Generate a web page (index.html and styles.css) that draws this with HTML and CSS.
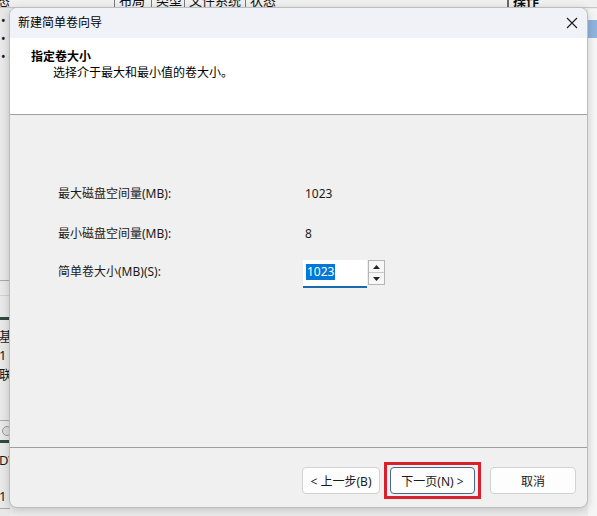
FILE: index.html
```html
<!DOCTYPE html>
<html lang="zh-CN">
<head>
    <meta charset="UTF-8">
    <meta name="viewport" content="width=device-width, initial-scale=1.0">
    <title>新建简单卷向导</title>
    <link rel="stylesheet" href="styles.css">
</head>
<body>
    <!-- 背后的磁盘管理窗口 -->
    <div class="console">
        <div class="col-head">
            <span class="col first">态</span>
            <span class="col c1">布局</span>
            <span class="col c2">类型</span>
            <span class="col c3">文件系统</span>
            <span class="col c4">状态</span>
            <span class="col c5">操作</span>
        </div>
        <div class="side-left">
            <div class="vol">•</div>
            <div class="vol">•</div>
            <div class="vol">• (</div>
            <div class="rule r1"></div>
            <div class="rule r2"></div>
            <div class="disk-bar b1"></div>
            <div class="disk-txt">基本</div>
            <div class="disk-txt">1</div>
            <div class="disk-txt">联机</div>
            <div class="rule r3"></div>
            <div class="disc-ico"></div>
            <div class="disk-bar b2"></div>
            <div class="disk-txt">DVD</div>
            <div class="disk-txt t2">1 未</div>
            <div class="rule r4"></div>
        </div>
        <div class="side-right">
            <div class="action-bar"></div>
        </div>
    </div>

    <!-- 向导对话框 -->
    <div class="dialog">
        <div class="titlebar">
            <span class="title">新建简单卷向导</span>
            <svg class="close" width="12" height="12" viewBox="0 0 12 12">
                <path d="M1 1 L11 11 M11 1 L1 11" stroke="#1a1a1a" stroke-width="1.1" fill="none"/>
            </svg>
        </div>

        <div class="header">
            <div class="header-title">指定卷大小</div>
            <div class="header-sub">选择介于最大和最小值的卷大小。</div>
        </div>

        <div class="content">
            <div class="row row-max">
                <span class="label">最大磁盘空间量(MB):</span>
                <span class="value">1023</span>
            </div>
            <div class="row row-min">
                <span class="label">最小磁盘空间量(MB):</span>
                <span class="value">8</span>
            </div>
            <div class="row row-size">
                <span class="label">简单卷大小(MB)(S):</span>
                <div class="spin">
                    <div class="spin-input"><span class="selected">1023</span></div>
                    <div class="spin-btns">
                        <div class="spin-btn">
                            <svg width="7" height="4" viewBox="0 0 7 4"><path d="M0 4 L3.5 0 L7 4 Z" fill="#222"/></svg>
                        </div>
                        <div class="spin-btn">
                            <svg width="7" height="4" viewBox="0 0 7 4"><path d="M0 0 L3.5 4 L7 0 Z" fill="#222"/></svg>
                        </div>
                    </div>
                </div>
            </div>
        </div>

        <div class="footer">
            <button class="btn btn-back">&lt; 上一步(B)</button>
            <button class="btn btn-next">下一页(N) &gt;<span class="mark"></span></button>
            <button class="btn btn-cancel">取消</button>
        </div>
    </div>
</body>
</html>
```

FILE: styles.css
```css
* {
    margin: 0;
    padding: 0;
    box-sizing: border-box;
}

body {
    width: 597px;
    height: 516px;
    overflow: hidden;
    position: relative;
    background: #ececec;
    font-family: "Noto Sans", "Noto Sans CJK SC", sans-serif;
    font-size: 12px;
    color: #1a1a1a;
}

/* 背景窗口 */
.console {
    width: 100%;
    height: 100%;
    display: flex;
    flex-direction: column;
}

.col-head {
    height: 8px;
    display: flex;
    background: #f0f0f0;
    border-bottom: 1px solid #c8c8c8;
    overflow: hidden;
}

.col {
    flex-shrink: 0;
    white-space: nowrap;
    line-height: 14px;
    margin-top: -7px;
    padding: 0 4px;
    border-left: 1px solid #7a7a7a;
    font-size: 13px;
    color: #111;
}

.first {
    border-left: none;
    margin-left: -7px;
    width: 121px;
}

.c1 { width: 37px; }
.c2 { width: 33px; }
.c3 { width: 61px; }
.c4 { width: 262px; }
.c5 { border-left: 2px solid #6a6a6a; font-weight: bold; }

.side-left {
    width: 10px;
    display: flex;
    flex-direction: column;
    overflow: hidden;
    white-space: nowrap;
    background: #e8e8e8;
    flex: 1;
}

.vol {
    line-height: 18px;
    font-size: 12px;
    padding-left: 1px;
}

.vol:first-child {
    margin-top: 4px;
}

.rule {
    height: 1px;
    background: #a8a8a8;
}

.r1 { margin-top: 214px; }
.r2 { margin-top: 14px; background: #d0d0d0; }
.r3 { margin-top: 36px; }
.r4 { margin-top: 2px; }

.disk-bar {
    height: 3px;
    background: #2f4b3a;
}

.b1 { margin-top: 21px; }
.b2 { margin-top: 4px; }

.disk-txt {
    line-height: 19px;
    font-size: 13px;
    margin-left: -1px;
}

.b1 + .disk-txt { margin-top: 7px; }
.b2 + .disk-txt { margin-top: 8px; }
.t2 { margin-top: 17px; }

.disc-ico {
    width: 10px;
    height: 10px;
    margin-top: 5px;
    margin-left: 2px;
    border-radius: 50%;
    border: 1px solid #9a9a9a;
    background: #dcdcdc;
}

.side-right {
    position: absolute;
    right: 0;
    top: 9px;
    width: 9px;
    bottom: 0;
    background: #f5f5f5;
}

.action-bar {
    height: 18px;
    margin-top: 11px;
    background: #8fb3dc;
}

/* 对话框 */
.dialog {
    position: absolute;
    left: 9px;
    top: 7px;
    width: 579px;
    height: 501px;
    display: flex;
    flex-direction: column;
    background: #f0f0f0;
    border: 1px solid #bdbdbd;
    border-radius: 8px;
    overflow: hidden;
    box-shadow: 0 2px 8px rgba(0, 0, 0, 0.18);
}

.titlebar {
    height: 30px;
    flex-shrink: 0;
    display: flex;
    align-items: center;
    justify-content: space-between;
    padding: 0 9px 0 8px;
    background: #f0f2f8;
}

.title {
    font-size: 12px;
    line-height: 16px;
    color: #000;
}

.header {
    height: 77px;
    flex-shrink: 0;
    padding: 11px 0 0 21px;
    background: #ffffff;
    border-bottom: 1px solid #a0a0a0;
}

.header-title {
    font-weight: bold;
    line-height: 16px;
    color: #000;
}

.header-sub {
    line-height: 16px;
    padding-left: 22px;
    color: #000;
}

.content {
    flex: 1;
    padding: 71px 0 0 48px;
    border-bottom: 1px solid #a0a0a0;
}

.row {
    display: flex;
    align-items: center;
}

.label {
    width: 245px;
    line-height: 16px;
}

.value {
    line-height: 16px;
    padding-left: 2px;
}

.row-min {
    margin-top: 24px;
}

.row-size {
    margin-top: 18px;
}

.row-size .label {
    margin-top: -4px;
}

/* 数字调节框 */
.spin {
    display: flex;
    height: 28px;
}

.spin-input {
    width: 64px;
    height: 28px;
    padding: 3px 0 0 3px;
    background: #ffffff;
    border-bottom: 2px solid #1b6aae;
}

.selected {
    display: inline-block;
    line-height: 16px;
    padding: 0 1px;
    background: #0078d7;
    color: #ffffff;
}

.spin-btns {
    width: 17px;
    height: 25px;
    margin-left: 1px;
    display: flex;
    flex-direction: column;
    border: 1px solid #b4b4b4;
    background: #f7f7f7;
}

.spin-btn {
    flex: 1;
    display: flex;
    align-items: center;
    justify-content: center;
}

.spin-btn + .spin-btn {
    border-top: 1px solid #c8c8c8;
}

/* 底部按钮 */
.footer {
    height: 59px;
    flex-shrink: 0;
    display: flex;
    align-items: flex-start;
    padding: 19px 11px 0 0;
    justify-content: flex-end;
}

.btn {
    position: relative;
    height: 27px;
    font-family: inherit;
    font-size: 12px;
    color: #1a1a1a;
    background: #fdfdfd;
    border: 1px solid #d2d2d2;
    border-radius: 4px;
}

.btn-back {
    width: 78px;
}

.btn-next {
    width: 85px;
    margin-left: 10px;
    border-color: #45698f;
}

.btn-cancel {
    width: 86px;
    margin-left: 15px;
}

/* 红色标注框 */
.mark {
    position: absolute;
    left: -7px;
    top: -6px;
    width: 97px;
    height: 37px;
    border: 3px solid #d9202c;
}
```
